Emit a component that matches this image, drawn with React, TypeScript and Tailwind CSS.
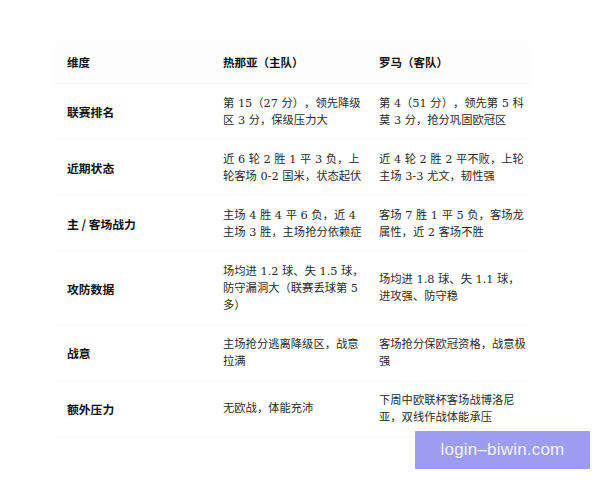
const rows: [string, string, string][] = [
  ['联赛排名', '第 15（27 分），领先降级区 3 分，保级压力大', '第 4（51 分），领先第 5 科莫 3 分，抢分巩固欧冠区'],
  ['近期状态', '近 6 轮 2 胜 1 平 3 负，上轮客场 0-2 国米，状态起伏', '近 4 轮 2 胜 2 平不败，上轮主场 3-3 尤文，韧性强'],
  ['主 / 客场战力', '主场 4 胜 4 平 6 负，近 4 主场 3 胜，主场抢分依赖症', '客场 7 胜 1 平 5 负，客场龙属性，近 2 客场不胜'],
  ['攻防数据', '场均进 1.2 球、失 1.5 球，防守漏洞大（联赛丢球第 5 多）', '场均进 1.8 球、失 1.1 球，进攻强、防守稳'],
  ['战意', '主场抢分逃离降级区，战意拉满', '客场抢分保欧冠资格，战意极强'],
  ['额外压力', '无欧战，体能充沛', '下周中欧联杯客场战博洛尼亚，双线作战体能承压'],
]

const bodyFont = "font-['DejaVu_Serif','Noto_Sans_CJK_SC',serif]"
const headFont = "font-['Noto_Sans_CJK_SC',sans-serif]"

export default function App() {
  return (
    <div className="relative w-[600px] h-[480px] bg-white overflow-hidden">
      <div className="pt-[41px] pl-[55px]">
        <table className="w-[474px] table-fixed border-collapse text-[11.3px] leading-[17px] text-[#2a2a2a] [text-spacing-trim:space-all]">
          <colgroup>
            <col className="w-[156px]" />
            <col className="w-[156px]" />
            <col className="w-[162px]" />
          </colgroup>
          <thead>
            <tr className={`bg-[#fdfdfd] border-b border-[#f5f5f5] ${headFont} text-[#111]`}>
              <th className="text-left font-bold text-[11.5px] pl-3 pr-0 py-[12.5px]">维度</th>
              <th className="text-left font-bold text-[11.5px] pl-3 pr-0 py-[12.5px]">热那亚（主队）</th>
              <th className="text-left font-bold text-[11.5px] pl-3 pr-0 py-[12.5px]">罗马（客队）</th>
            </tr>
          </thead>
          <tbody>
            {rows.map(([dim, home, away]) => (
              <tr key={dim} className="border-b border-[#f5f5f5] align-middle">
                <td className={`pl-3 pr-0 py-[10.5px] ${headFont} font-bold text-[11.8px] text-[#111]`}>{dim}</td>
                <td className={`pl-3 pr-0 py-[10.5px] ${bodyFont}`}>{home}</td>
                <td className={`pl-3 pr-0 py-[10.5px] ${bodyFont}`}>{away}</td>
              </tr>
            ))}
          </tbody>
        </table>
      </div>

      <div className="absolute left-[415px] top-[431px] w-[175px] h-[38px] bg-[#9c9cf0] flex items-center justify-center">
        <span className="font-['Liberation_Sans',sans-serif] text-[17px] text-[#f3f3ff] tracking-[0.2px]">login–biwin.com</span>
      </div>
    </div>
  )
}
